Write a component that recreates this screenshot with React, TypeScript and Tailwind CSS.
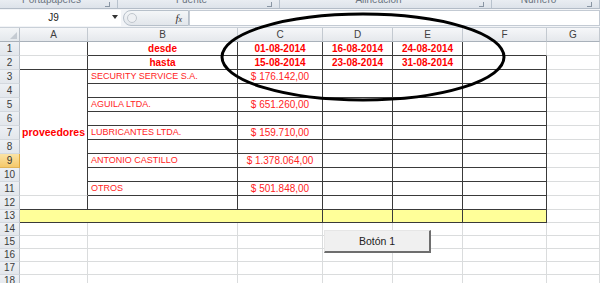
import React from "react";

const DARK = "#3a3a3a";
const cols = ["A", "B", "C", "D", "E", "F", "G"];

type CellSpec = {
  text?: string;
  kind?: "bold" | "name" | "value";
  align?: "left" | "center";
};

const data: Record<string, CellSpec> = {
  B1: { text: "desde", kind: "bold" },
  B2: { text: "hasta", kind: "bold" },
  C1: { text: "01-08-2014", kind: "bold" },
  D1: { text: "16-08-2014", kind: "bold" },
  E1: { text: "24-08-2014", kind: "bold" },
  C2: { text: "15-08-2014", kind: "bold" },
  D2: { text: "23-08-2014", kind: "bold" },
  E2: { text: "31-08-2014", kind: "bold" },
  B3: { text: "SECURITY SERVICE S.A.", kind: "name" },
  B5: { text: "AGUILA LTDA.", kind: "name" },
  B7: { text: "LUBRICANTES LTDA.", kind: "name" },
  B9: { text: "ANTONIO CASTILLO", kind: "name" },
  B11: { text: "OTROS", kind: "name" },
  C3: { text: "$ 176.142,00", kind: "value" },
  C5: { text: "$ 651.260,00", kind: "value" },
  C7: { text: "$ 159.710,00", kind: "value" },
  C9: { text: "$ 1.378.064,00", kind: "value" },
  C11: { text: "$ 501.848,00", kind: "value" },
};

function rightDark(r: number, c: number) {
  if (c === 0 || c === 1) return r <= 12;
  if (c >= 2 && c <= 4) return r <= 13;
  if (c === 5) return r >= 2 && r <= 13;
  return false;
}
function bottomDark(r: number, c: number) {
  if (c === 6) return false;
  if (r === 1) return c >= 1;
  if (r === 2) return true;
  if (r >= 3 && r <= 11) return c >= 1;
  if (r === 12 || r === 13) return true;
  return false;
}

function Content({ spec }: { spec?: CellSpec }) {
  if (!spec?.text) return null;
  if (spec.kind === "bold")
    return (
      <span className="w-full text-center text-[10px] font-bold leading-none text-[#ff0000]">
        {spec.text}
      </span>
    );
  if (spec.kind === "name")
    return (
      <span className="w-full pl-[3px] text-left text-[9px] leading-none text-[#ff2424] whitespace-nowrap">
        {spec.text}
      </span>
    );
  return (
    <span className="w-full text-center text-[10px] leading-none text-[#ff2424] whitespace-nowrap">
      {spec.text}
    </span>
  );
}

function Cell({ r, c }: { r: number; c: number }) {
  const rd = rightDark(r, c);
  const bd = bottomDark(r, c);
  const key = cols[c] + r;
  return (
    <div
      className={
        "flex items-center overflow-visible border-r border-b bg-white " +
        (rd ? "border-r-[#3a3a3a] " : "border-r-[#dadcdd] ") +
        (bd ? "border-b-[#3a3a3a]" : "border-b-[#dadcdd]")
      }
    >
      <Content spec={data[key]} />
    </div>
  );
}

function RowHeader({ r }: { r: number }) {
  const sel = r === 9;
  return (
    <div
      className={
        "flex items-center justify-center border-r border-b text-[10px] leading-none " +
        (sel
          ? "bg-gradient-to-b from-[#fbe3a5] to-[#f5c96a] border-r-[#e0a93c] border-b-[#e0b45a] text-[#333]"
          : "bg-gradient-to-b from-[#edf0f4] to-[#e3e7ec] border-r-[#b9c0c8] border-b-[#d3d8de] text-[#3c3c3c]")
      }
    >
      {r}
    </div>
  );
}

export default function App() {
  const rows = Array.from({ length: 18 }, (_, i) => i + 1);
  const cells: React.ReactNode[] = [];
  rows.forEach((r) => {
    cells.push(<RowHeader key={"h" + r} r={r} />);
    cols.forEach((_, c) => {
      if (c === 0 && r >= 4 && r <= 11) return;
      if (r === 13 && (c === 1 || c === 2)) return;
      if (c === 0 && r === 3) {
        cells.push(
          <div
            key="A3"
            className="row-span-9 flex items-center justify-center border-r border-b border-r-[#3a3a3a] border-b-[#dadcdd] bg-white"
          >
            <span className="text-[10.5px] font-bold leading-none text-[#ff0000]">proveedores</span>
          </div>
        );
        return;
      }
      if (c === 0 && r === 13) {
        cells.push(
          <div
            key="A13"
            className="col-span-3 border-r border-b border-r-[#3a3a3a] border-b-[#3a3a3a] bg-[#ffff99]"
          />
        );
        return;
      }
      if (r === 13) {
        cells.push(
          <div
            key={"c13" + c}
            className={
              "border-r border-b " +
              (c === 6
                ? "bg-white border-r-[#dadcdd] border-b-[#dadcdd]"
                : "bg-[#ffff99] border-r-[#3a3a3a] border-b-[#3a3a3a]")
            }
          />
        );
        return;
      }
      cells.push(<Cell key={cols[c] + r} r={r} c={c} />);
    });
  });

  const groups = [
    { w: 118, label: "Portapapeles" },
    { w: 162, label: "Fuente" },
    { w: 212, label: "Alineación" },
    { w: 108, label: "Número" },
  ];

  return (
    <div className="relative h-[283px] w-[600px] overflow-hidden bg-white font-['Liberation_Sans',Arial,sans-serif]">
      {/* ribbon bottom strip */}
      <div className="flex h-[9px] overflow-hidden border-b border-[#b3bcc7] bg-gradient-to-b from-[#e9edf2] to-[#dde3ea]">
        {groups.map((g) => (
          <div
            key={g.label}
            style={{ width: g.w }}
            className="relative flex shrink-0 justify-center border-r border-[#b8c2cd] pr-[14px]"
          >
            <span className="-mt-[5px] text-[10px] leading-none text-[#6b7480]">{g.label}</span>
            <span className="absolute right-[7px] top-[2px] h-[5px] w-[5px] border-r border-b border-[#8a96a4]" />
          </div>
        ))}
      </div>

      {/* formula bar */}
      <div className="flex h-[19px] items-center bg-[#f2f4f7] border-b border-[#c9d0d8]">
        <div className="relative flex h-[16px] w-[121px] items-center justify-center bg-white">
          <span className="text-[10px] leading-none text-[#222] pr-[14px]">J9</span>
          <span className="absolute right-[3px] top-[5px] h-0 w-0 border-x-[3px] border-t-[4px] border-x-transparent border-t-[#333]" />
        </div>
        <div className="ml-[2px] flex h-[16px] w-[66px] items-center rounded-l-full border border-[#b7c0ca] bg-gradient-to-b from-[#f4f6f8] to-[#e2e6eb] pl-[3px]">
          <span className="h-[10px] w-[10px] rounded-full border border-[#c0c6cd] bg-[#eef0f3]" />
          <span className="ml-auto mr-[6px] font-['Liberation_Serif',serif] text-[11px] italic leading-none text-[#333]">
            f<span className="text-[8px]">x</span>
          </span>
        </div>
        <div className="h-[16px] flex-1 border border-[#c3cad3] bg-white" />
      </div>

      {/* column headers */}
      <div className="grid h-[14px] grid-cols-[20px_68px_150px_85px_70px_70px_84px_53px]">
        <div className="relative border-r border-b border-r-[#b9c0c8] border-b-[#a9b1ba] bg-gradient-to-b from-[#f3f5f7] to-[#e4e8ec]">
          <span className="absolute bottom-[2px] right-[2px] h-0 w-0 border-l-[7px] border-t-[7px] border-l-transparent border-t-transparent border-b-0 border-r-0 [border-right:0] [border-bottom:7px_solid_#c5cbd2] [border-left:7px_solid_transparent] [border-top:0]" />
        </div>
        {cols.map((c) => (
          <div
            key={c}
            className="flex items-center justify-center border-r border-b border-r-[#c3c9d0] border-b-[#a9b1ba] bg-gradient-to-b from-[#f6f7f9] to-[#e5e8ec] text-[10px] leading-none text-[#3f3f3f]"
          >
            {c}
          </div>
        ))}
      </div>

      {/* sheet body */}
      <div className="relative grid grid-cols-[20px_68px_150px_85px_70px_70px_84px_53px] grid-rows-[repeat(12,14px)_repeat(6,13px)]">
        {cells}
        <div className="absolute left-[324px] top-[188px] flex h-[23px] w-[107px] items-center justify-center border-t border-l border-r-2 border-b-2 border-t-[#e6e6e6] border-l-[#e6e6e6] border-r-[#6e6e6e] border-b-[#6e6e6e] bg-[#f0f0f0]">
          <span className="text-[10.5px] leading-none text-[#222]">Botón 1</span>
        </div>
      </div>

      {/* hand drawn ellipse */}
      <svg className="pointer-events-none absolute left-0 top-0" width="600" height="283" viewBox="0 0 600 283">
        <ellipse cx="363" cy="57" rx="141" ry="43" fill="none" stroke="#000" strokeWidth="3" />
      </svg>
    </div>
  );
}
